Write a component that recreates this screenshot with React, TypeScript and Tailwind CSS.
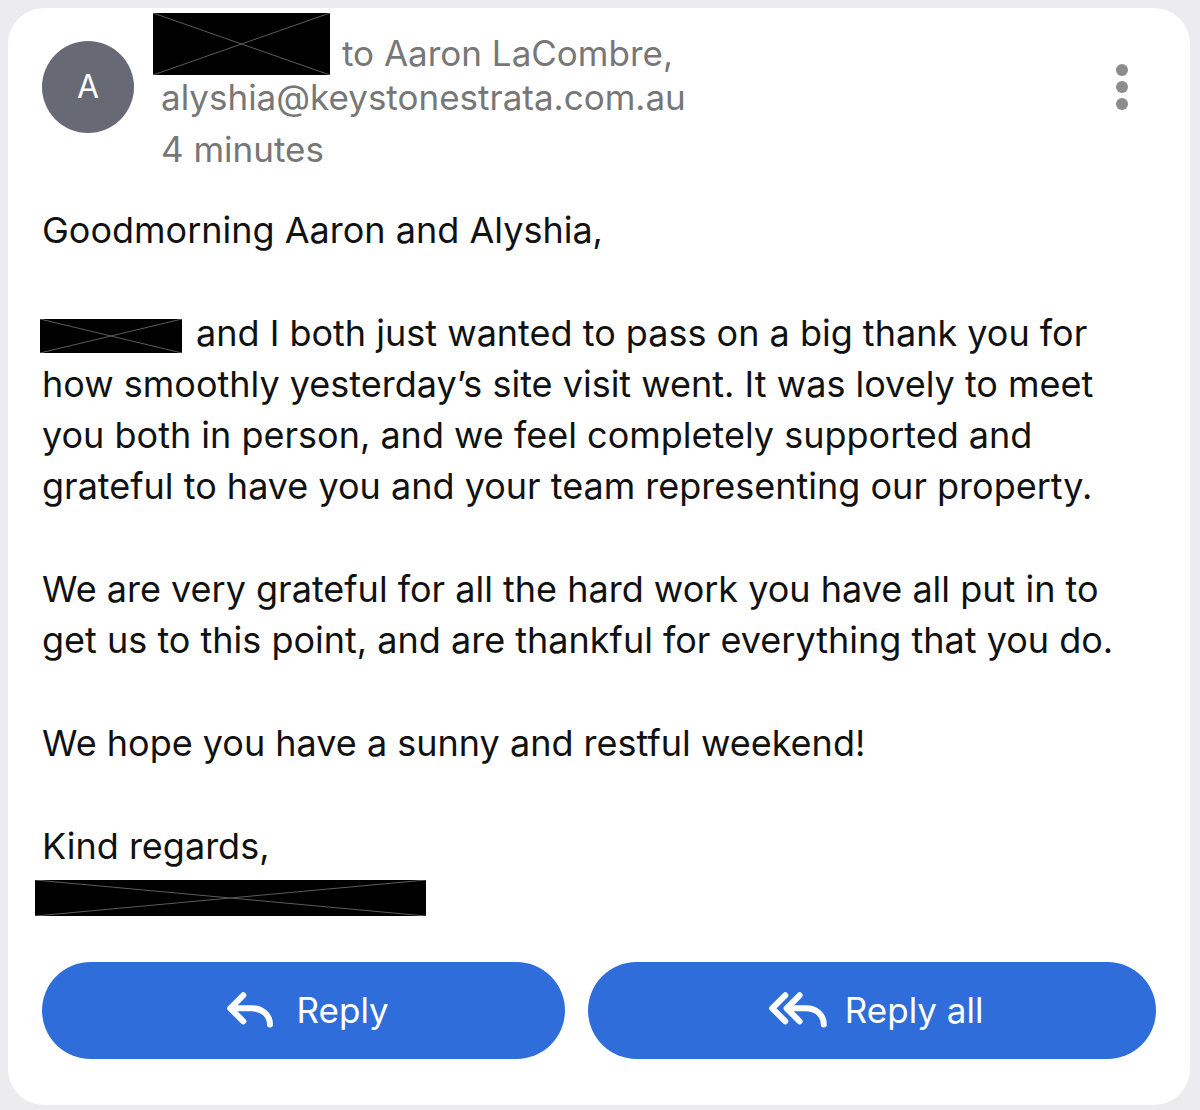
import React from "react";

function Redaction({ className }: { className: string }) {
  return (
    <svg
      role="img"
      aria-label="Redacted"
      viewBox="0 0 100 100"
      preserveAspectRatio="none"
      className={className}
    >
      <rect width="100" height="100" fill="#000" />
      <path
        d="M0 0L100 100M0 100L100 0"
        stroke="#5c5c5c"
        strokeWidth="1"
        vectorEffect="non-scaling-stroke"
        fill="none"
      />
    </svg>
  );
}

function ReplyIcon() {
  return (
    <svg
      aria-hidden="true"
      viewBox="0 0 46 38"
      className="h-[38px] w-[46px] shrink-0"
      fill="none"
      stroke="currentColor"
      strokeWidth="6"
      strokeLinecap="round"
      strokeLinejoin="round"
    >
      <path d="M16.3 3.3L3.2 16.3L16.3 29.3" />
      <path d="M4 16.3H25C35 16.3 43 23 43 32.5" />
    </svg>
  );
}

function ReplyAllIcon() {
  return (
    <svg
      aria-hidden="true"
      viewBox="0 0 58 38"
      className="h-[38px] w-[58px] shrink-0"
      fill="none"
      stroke="currentColor"
      strokeWidth="6"
      strokeLinecap="round"
      strokeLinejoin="round"
    >
      <path d="M16.3 3.3L3.2 16.3L16.3 29.3" />
      <path d="M30.6 3.3L17.6 16.3L30.6 29.3" />
      <path d="M18.5 16.3H37C47 16.3 54.8 23 54.8 32.5" />
    </svg>
  );
}

const buttonBase =
  "flex h-[97px] items-center justify-center rounded-full bg-[#2f6eda] pl-2 text-[35px] text-white";

export default function App() {
  return (
    <main className="min-h-screen bg-[#ececee] pt-2 pr-[10px] pb-[5px] pl-2 font-['Inter',sans-serif]">
      <article className="rounded-[36px] bg-white px-[34px] pt-[5px] pb-[46px]">
        <header className="flex items-start">
          <div className="mt-7 flex size-[92px] shrink-0 items-center justify-center rounded-full bg-[#676975] text-[32px] text-white">
            A
          </div>
          <div className="ml-[19px] flex-1 text-[35px] leading-[44px] text-[#777777]">
            <div className="flex items-end">
              <Redaction className="h-[62px] w-[177px] shrink-0" />
              <span className="ml-3">to Aaron LaCombre,</span>
            </div>
            <div className="pl-2">
              <a href="mailto:alyshia@keystonestrata.com.au">alyshia@keystonestrata.com.au</a>
            </div>
            <time className="mt-2 block pl-2">4 minutes</time>
          </div>
          <button
            type="button"
            aria-label="More options"
            className="mt-[51px] mr-7 flex flex-col items-center gap-[5px]"
          >
            <span className="size-3 rounded-full bg-[#8c8c8c]" />
            <span className="size-3 rounded-full bg-[#8c8c8c]" />
            <span className="size-3 rounded-full bg-[#8c8c8c]" />
          </button>
        </header>

        <div className="mt-[34px] flex flex-col gap-[52px] text-4xl leading-[51px] whitespace-nowrap text-[#111111]">
          <p>Goodmorning Aaron and Alyshia,</p>
          <p>
            <Redaction className="-ml-0.5 mr-3.5 inline-block h-[34px] w-[142px] align-middle" />
            and I both just wanted to pass on a big thank you for
            <br />
            how smoothly yesterday’s site visit went. It was lovely to meet
            <br />
            you both in person, and we feel completely supported and
            <br />
            grateful to have you and your team representing our property.
          </p>
          <p>
            We are very grateful for all the hard work you have all put in to
            <br />
            get us to this point, and are thankful for everything that you do.
          </p>
          <p>We hope you have a sunny and restful weekend!</p>
          <p>Kind regards,</p>
        </div>
        <Redaction className="mt-2 -ml-[7px] block h-9 w-[391px]" />

        <div className="mt-[46px] flex gap-[23px]">
          <button type="button" className={`${buttonBase} flex-[523] gap-6`}>
            <ReplyIcon />
            Reply
          </button>
          <button type="button" className={`${buttonBase} flex-[568] gap-[18px]`}>
            <ReplyAllIcon />
            Reply all
          </button>
        </div>
      </article>
    </main>
  );
}
